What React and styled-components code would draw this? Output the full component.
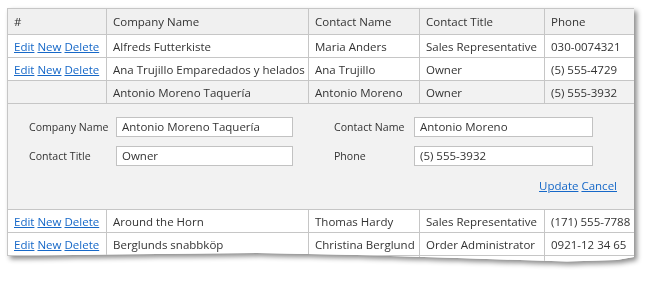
import React from "react";
import styled, { createGlobalStyle } from "styled-components";

const Global = createGlobalStyle`
  html, body { margin: 0; padding: 0; background: #fff; }
  body { font-family: "Open Sans", "Noto Sans", sans-serif; font-size: 11.5px; color: #333; }
`;

const Page = styled.div`
  padding: 8px 0 0 7px;
  width: 647px;
  height: 281px;
  box-sizing: border-box;
  overflow: hidden;
`;

const Shadow = styled.div`
  width: 627px;
  filter: drop-shadow(3px 3px 2.5px rgba(0, 0, 0, 0.45));
`;

const Sheet = styled.div`
  width: 627px;
  height: 256px;
  overflow: hidden;
  background: #fff;
  clip-path: polygon(0 0, 627px 0, 627px 249px, 610px 252px, 560px 253.5px, 450px 250px, 350px 247px, 250px 245px, 100px 246.5px, 0 248px);
`;

const Table = styled.table`
  border-collapse: collapse;
  table-layout: fixed;
  width: 627px;
  border: 1px solid #c6c6c6;
`;

const Col = styled.col``;

const Th = styled.th`
  height: 26px;
  padding: 0 6px;
  text-align: left;
  font-weight: normal;
  background: #f0f0f0;
  border: 1px solid #c6c6c6;
  white-space: nowrap;
  box-sizing: border-box;
`;

const Row = styled.tr`
  height: 23px;
  background: ${(p) => (p.$editing ? "#f2f2f2" : "#fff")};
`;

const Td = styled.td`
  padding: 0 6px;
  border: 1px solid #c6c6c6;
  white-space: nowrap;
  overflow: hidden;
  box-sizing: border-box;
`;

const Link = styled.a`
  color: #1668c8;
  text-decoration: underline;
  cursor: pointer;
  margin-right: 3px;
  &:last-child { margin-right: 0; }
`;

const FormCell = styled.td`
  background: #f2f2f2;
  border: 1px solid #c6c6c6;
  padding: 13px 17px 0 21px;
  height: 106px;
  box-sizing: border-box;
  vertical-align: top;
`;

const FormGrid = styled.div`
  display: grid;
  grid-template-columns: 87px 218px 80px 179px;
  row-gap: 9px;
  align-items: center;
`;

const Label = styled.label`
  white-space: nowrap;
  font-size: 10.6px;
`;

const Input = styled.div`
  width: ${(p) => p.$w}px;
  height: 20px;
  box-sizing: border-box;
  border: 1px solid #c2c2c2;
  background: #fff;
  padding: 0 5px;
  line-height: 18px;
  white-space: nowrap;
`;

const Actions = styled.div`
  display: flex;
  justify-content: flex-end;
  margin-top: 12px;
  line-height: 16px;
`;

const rowsTop = [
  ["Alfreds Futterkiste", "Maria Anders", "Sales Representative", "030-0074321"],
  ["Ana Trujillo Emparedados y helados", "Ana Trujillo", "Owner", "(5) 555-4729"],
];
const rowsBottom = [
  ["Around the Horn", "Thomas Hardy", "Sales Representative", "(171) 555-7788"],
  ["Berglunds snabbköp", "Christina Berglund", "Order Administrator", "0921-12 34 65"],
];

const Commands = () => (
  <>
    <Link>Edit</Link>
    <Link>New</Link>
    <Link>Delete</Link>
  </>
);

const DataRow = ({ r }) => (
  <Row>
    <Td><Commands /></Td>
    {r.map((c, i) => (
      <Td key={i}>{c}</Td>
    ))}
  </Row>
);

export default function App() {
  return (
    <Page>
      <Global />
      <Shadow>
        <Sheet>
          <Table>
            <colgroup>
              <Col style={{ width: 99 }} />
              <Col style={{ width: 202 }} />
              <Col style={{ width: 111 }} />
              <Col style={{ width: 125 }} />
              <Col style={{ width: 90 }} />
            </colgroup>
            <thead>
              <tr>
                <Th>#</Th>
                <Th>Company Name</Th>
                <Th>Contact Name</Th>
                <Th>Contact Title</Th>
                <Th>Phone</Th>
              </tr>
            </thead>
            <tbody>
              {rowsTop.map((r, i) => (
                <DataRow key={i} r={r} />
              ))}
              <Row $editing>
                <Td></Td>
                <Td>Antonio Moreno Taquería</Td>
                <Td>Antonio Moreno</Td>
                <Td>Owner</Td>
                <Td>(5) 555-3932</Td>
              </Row>
              <tr>
                <FormCell colSpan={5}>
                  <FormGrid>
                    <Label>Company Name</Label>
                    <Input $w={177}>Antonio Moreno Taquería</Input>
                    <Label>Contact Name</Label>
                    <Input $w={179}>Antonio Moreno</Input>
                    <Label>Contact Title</Label>
                    <Input $w={177}>Owner</Input>
                    <Label>Phone</Label>
                    <Input $w={179}>(5) 555-3932</Input>
                  </FormGrid>
                  <Actions>
                    <Link>Update</Link>
                    <Link>Cancel</Link>
                  </Actions>
                </FormCell>
              </tr>
              {rowsBottom.map((r, i) => (
                <DataRow key={i} r={r} />
              ))}
              <Row>
                <Td></Td>
                <Td></Td>
                <Td></Td>
                <Td></Td>
                <Td></Td>
              </Row>
            </tbody>
          </Table>
        </Sheet>
      </Shadow>
    </Page>
  );
}
